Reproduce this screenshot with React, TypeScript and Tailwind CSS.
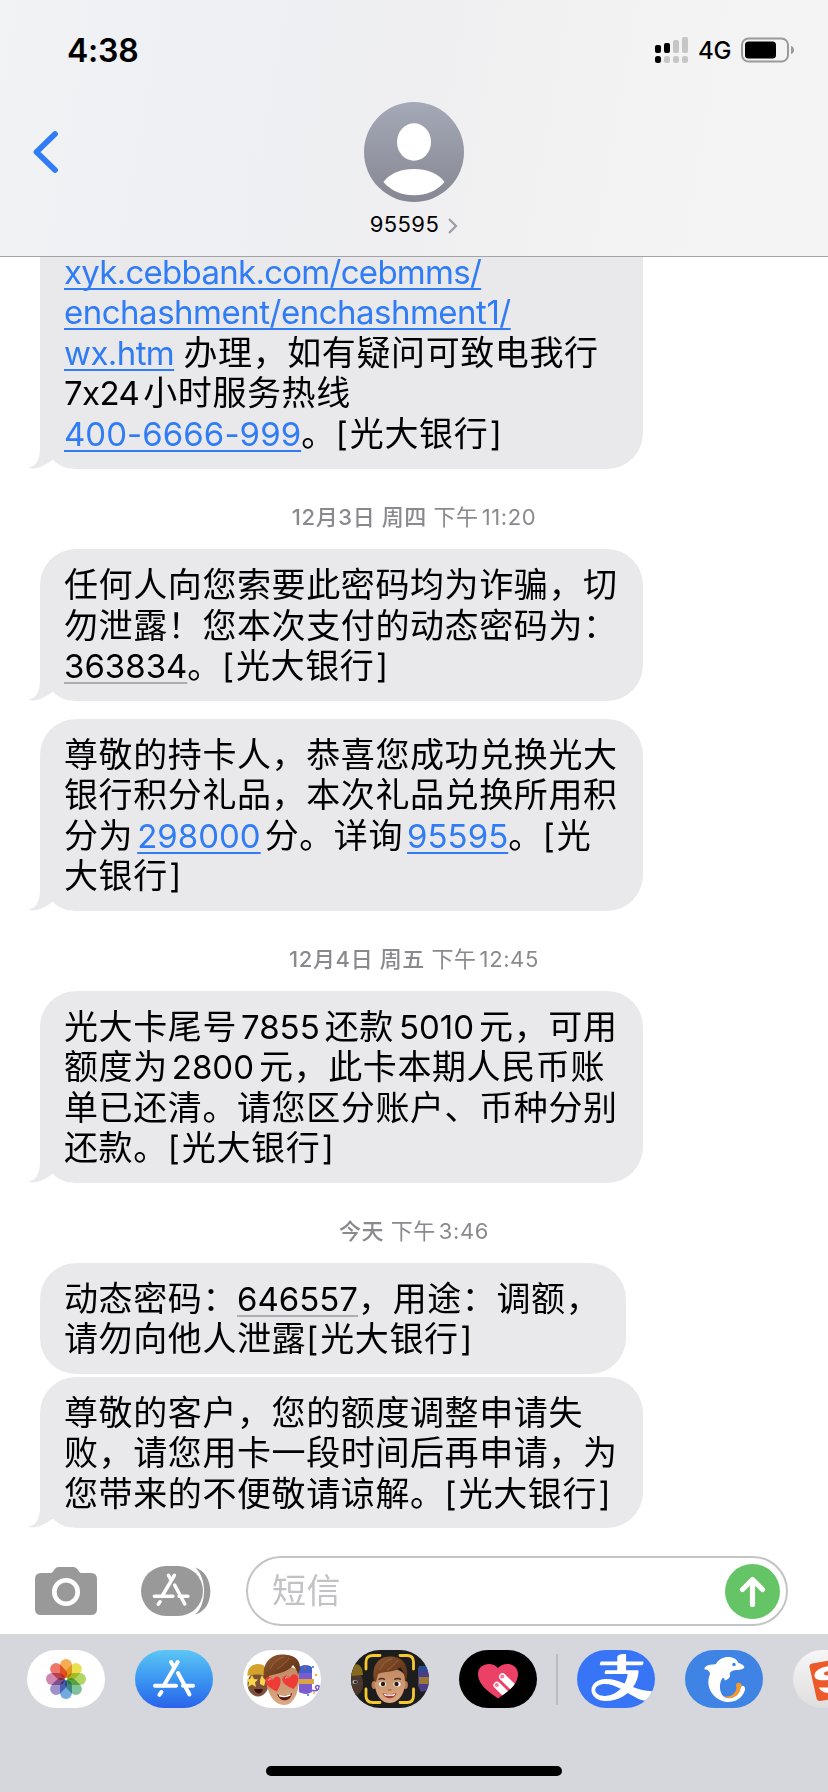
import { AiOutlineAlipay } from "react-icons/ai";
import type { ReactNode } from "react";

type Run = { t: string; kind?: "latin" | "link" | "code"; cls?: string };
type Message = { id: number; lines: Run[][]; box: string; tail: boolean };

const L = (t: string, cls = ""): Run => ({ t, kind: "latin", cls });
const A = (t: string, cls = ""): Run => ({ t, kind: "link", cls });
const C = (t: string, cls = ""): Run => ({ t, kind: "code", cls });
const T = (t: string): Run => ({ t });

// every bank text closes with the same signature
const sign: Run[] = [L("[", "mr-0.5"), T("光大银行"), L("]", "ml-[1.5px]")];

const m1: Message = {
  id: 1, box: "w-[603px] rounded-b-[36px] py-[15px]", tail: true,
  lines: [
    [A("xyk.cebbank.com/cebmms/", "tracking-[-0.72px]")],
    [A("enchashment/enchashment1/", "tracking-[-0.5px]")],
    [A("wx.htm", "tracking-[-0.6px]"), L(" "), T("办理，如有疑问可致电我行")],
    [L("7x24", "mr-1 tracking-[-0.6px]"), T("小时服务热线")],
    [A("400-6666-999", "tracking-[0.05px]"), T("。"), ...sign],
  ],
};
const m2: Message = {
  id: 2, box: "w-[603px] rounded-[36px] pt-4 pb-[14px] mb-[18px]", tail: true,
  lines: [
    [T("任何人向您索要此密码均为诈骗，切")],
    [T("勿泄露！您本次支付的动态密码为：")],
    [C("363834"), T("。"), ...sign],
  ],
};
const m3: Message = {
  id: 3, box: "w-[603px] rounded-[36px] pt-4 pb-[14px]", tail: true,
  lines: [
    [T("尊敬的持卡人，恭喜您成功兑换光大")],
    [T("银行积分礼品，本次礼品兑换所用积")],
    [T("分为"), A("298000", "ml-1 mr-1"), T("分。详询"), A("95595", "ml-1"), T("。"), L("[", "mr-0.5"), T("光")],
    [T("大银行"), L("]", "ml-[1.5px]")],
  ],
};
const m4: Message = {
  id: 4, box: "w-[603px] rounded-[36px] pt-4 pb-[14px]", tail: true,
  lines: [
    [T("光大卡尾号"), L("7855", "ml-1 mr-[5px]"), T("还款"), L("5010", "ml-[5px] mr-[5px]"), T("元，可用")],
    [T("额度为"), L("2800", "ml-1 mr-[5px]"), T("元，此卡本期人民币账")],
    [T("单已还清。请您区分账户、币种分别")],
    [T("还款。"), ...sign],
  ],
};
const m5: Message = {
  id: 5, box: "w-[586px] rounded-[36px] pt-4 pb-[14px] mb-[3px]", tail: false,
  lines: [
    [T("动态密码："), C("646557"), T("，用途：调额，")],
    [T("请勿向他人泄露"), ...sign],
  ],
};
const m6: Message = {
  id: 6, box: "w-[603px] rounded-[36px] pt-4 pb-[14px]", tail: true,
  lines: [
    [T("尊敬的客户，您的额度调整申请失")],
    [T("败，请您用卡一段时间后再申请，为")],
    [T("您带来的不便敬请谅解。"), ...sign],
  ],
};

const tone = {
  latin: "text-[33px]",
  link: "text-[33px] text-[#2f7cf6] underline decoration-2 underline-offset-[4px] [text-decoration-skip-ink:none]",
  code: "text-[33px] underline decoration-2 decoration-[#aeaeb2] underline-offset-[4px] [text-decoration-skip-ink:none]",
};

const Bubble = ({ msg }: { msg: Message }) => (
  <div className={`relative ml-10 shrink-0 bg-[#e9e9eb] px-6 ${msg.box}`}>
    {msg.tail && (
      <svg className="absolute bottom-0 -left-[11px]" width="40" height="40" viewBox="0 0 40 40">
        <path d="M11 0 V20 C11 31 7 37 0 38.6 C1 40 5 40 9 40 H40 V0 Z" fill="#e9e9eb" />
        <path d="M0 40 V38.8 C2 39.6 6 39.4 10 38 C16 36 20 33 23.5 30.5 C28 35 36 40 46 40 Z" fill="#fff" />
        <path d="M0 38.8 C8 37 11 31 11 20 L26 26 L23.5 30.5 C18 35 12 38.5 6 39.3 C3 39.6 1 39.4 0 38.8 Z" fill="#e9e9eb" />
      </svg>
    )}
    {msg.lines.map((line, i) => (
      <p key={i} className="relative h-[40.5px] whitespace-pre text-[34px] leading-[40.5px] tracking-[0.6px] text-black">
        {line.map((r, j) =>
          r.kind ? (
            <span key={j} className={`${tone[r.kind]} ${r.cls?.includes("tracking") ? "" : "tracking-normal"} ${r.cls}`}>{r.t}</span>
          ) : (
            <span key={j}>{r.t}</span>
          )
        )}
      </p>
    ))}
  </div>
);

const Stamp = ({ day, time, clock }: { day: string; time: string; clock: string }) => (
  <div className="flex h-20 shrink-0 items-center justify-center whitespace-pre pt-4 text-[22px] leading-8 tracking-[0.6px] text-[#8a8a8e]">
    <span className="font-medium">{day} </span>
    <span>{time}</span>
    <span className="ml-[3px]">{clock}</span>
  </div>
);

const AppGlyph = () => (
  <g stroke="#fff" strokeWidth="4" strokeLinecap="round" fill="none">
    <path d="M42.7 12 L28.5 36 M36 12 L39.3 17.6 M43 23 L54.5 44.5 M20 35.8 H41 M48 35.8 H58 M26.4 42 L24.4 44.8" />
  </g>
);

const petals = ["#f5a13c", "#e9dc3c", "#a6cf52", "#6dbb8c", "#5f9fdc", "#8f83c4", "#c878a8", "#ea6358"];

const Pill = ({ bg, children }: { bg: string; children: ReactNode }) => (
  <div className={`h-[58px] w-[78px] shrink-0 overflow-hidden rounded-[29px] ${bg}`}>{children}</div>
);

const Photos = () => (
  <svg viewBox="0 0 78 58" className="h-full w-full">
    {petals.map((c, i) => (
      <rect key={c} x="33" y="9" width="12" height="19" rx="6" fill={c} opacity="0.88"
        transform={`rotate(${i * 45} 39 29)`} className="mix-blend-multiply" />
    ))}
  </svg>
);

const HairDefs = () => (
  <defs>
    <linearGradient id="hair" x1="0" y1="0" x2="1" y2="1">
      <stop offset="0" stopColor="#8f5a33" />
      <stop offset="0.6" stopColor="#6d3b1d" />
      <stop offset="1" stopColor="#5a2e16" />
    </linearGradient>
    <linearGradient id="skin" x1="0" y1="0" x2="0" y2="1">
      <stop offset="0" stopColor="#c08a63" />
      <stop offset="1" stopColor="#dba983" />
    </linearGradient>
  </defs>
);

const Stickers = () => (
  <svg viewBox="0 0 78 58" className="h-full w-full">
    <HairDefs />
    <ellipse cx="15" cy="34" rx="10.5" ry="12.5" fill="#7d5238" />
    <path d="M4.5 26 C4 18 9 14 15 14 C21 14 25 18 24 26 C18 24 10 24 4.5 26 Z" fill="#d3a32b" />
    <path d="M9 25 L11 29 L15 29.5 L12 32.5 L13 37 L9 34.5 L5 37 L6 32.5 L3 29.5 L7 29 Z M19 25 L21 29 L23 30 L21 36 L17 34 L17 30 Z" fill="#f9d64c" />
    <path d="M11 39 H20 C19 45 13 45 11 39 Z" fill="#3c1512" />
    <path d="M56 18 C60 14 68 15 69 18 L69 28 V42 C65 45 59 44 56 42 Z" fill="#7a5bd0" />
    <path d="M56 17 C60 14 68 15 69 18 V23 H56 Z" fill="#3d62c9" />
    <path d="M56 29 H71 V34 H56 Z" fill="#d9a441" />
    <path d="M68 40 C73 42 77 40 76 36 C73 34 71 38 74 39" stroke="#7a5bd0" strokeWidth="1.6" fill="none" />
    <circle cx="62" cy="18" r="1" fill="#e2483d" />
    <circle cx="70" cy="17" r="1" fill="#3d6be0" />
    <circle cx="73" cy="25" r="1.2" fill="#f0b429" />
    <circle cx="65" cy="45" r="1" fill="#3d6be0" />
    <circle cx="71" cy="43" r="1" fill="#f0b429" />
    <path d="M23 24 C22 40 30 55 41 55 C51 55 57 42 56 22 C52 14 27 14 23 24 Z" fill="url(#skin)" />
    <path d="M21 27 C19 13 28 5 38 4.5 C48 4 58 8 57 19 L55 25 C54 20 52 17 50 15 C45 23 31 24 26 26 L24 30 Z" fill="url(#hair)" />
    <path d="M27 19 C31 11 36 8 41 7 M34 19 C40 15 44 11 46 8" stroke="#a4683e" strokeWidth="0.9" fill="none" />
    <path d="M34 44 C39 47 44 46 49 43 C48 52 37 53 34 44 Z" fill="#5e1a17" />
    <path d="M36 45.4 C40 47 44 46.6 47.5 44.8" stroke="#fff" strokeWidth="1.6" fill="none" />
    <path d="M34 41.5 C26 38 21 34 22.5 29.5 C24 26 28.5 26.5 30 30 C31.5 25.5 36.5 25.5 37.5 29.5 C38 34 36 38 34 41.5 Z M50.5 39 C43 36 38.5 32 39.5 28 C41 24.5 45.5 24.5 47 28 C48 23.5 53 23 55 27 C56 31 53.5 36 50.5 39 Z" fill="#ef3b36" />
    <path d="M25.5 30.5 C26 29 27 28.6 28 29 M42.5 28.5 C43 27 44 26.8 45 27.2" stroke="#ff9d94" strokeWidth="1.2" strokeLinecap="round" fill="none" />
  </svg>
);

const Memoji = () => (
  <svg viewBox="0 0 78 58" className="h-full w-full">
    <path d="M0 20 C8 20 12 25 12 34 C12 42 7 46 2 46 L0 40 Z" fill="#4b372b" />
    <path d="M3 15 C8 12 12 18 12 25 L0 26 Z" fill="#84691f" />
    <ellipse cx="4" cy="32" rx="2.6" ry="2" fill="#bbb" />
    <circle cx="4.5" cy="32" r="1.5" fill="#222" />
    <path d="M67 18 C71 14 76 16 78 20 V40 L70 42 L67 36 Z" fill="#4d3c86" />
    <path d="M68 27 H78 V34 H68 Z" fill="#9a7838" />
    <path d="M68 16 H77 V22 H67 Z" fill="#294c8f" />
    <ellipse cx="23" cy="35" rx="2.4" ry="4" fill="#b97c55" />
    <ellipse cx="54.5" cy="35" rx="2.4" ry="4" fill="#b97c55" />
    <path d="M24 26 C22 42 29 53 38.5 53 C48 53 56 42 54 26 C50 16 28 16 24 26 Z" fill="url(#skin)" />
    <path d="M23 31 C20 15 28 7 38 6.5 C49 6 58 12 56 28 L54 32 C54 24 52 20 49 17.5 C42 23 33 21 27 24 L25 32 Z" fill="url(#hair)" />
    <path d="M29 20 C32 13 36 10 41 9 M36 20 C41 17 45 13 47 10" stroke="#a4683e" strokeWidth="0.9" fill="none" />
    <ellipse cx="31.5" cy="34" rx="3.6" ry="2.6" fill="#fff" />
    <ellipse cx="46" cy="34" rx="3.6" ry="2.6" fill="#fff" />
    <circle cx="32" cy="34" r="2.2" fill="#2a1a12" />
    <circle cx="45.5" cy="34" r="2.2" fill="#2a1a12" />
    <path d="M27.5 29.5 Q31 27.5 34 29.5 M43 29.5 Q47 27.5 50 29.5" stroke="#4e2a16" strokeWidth="1.3" fill="none" />
    <path d="M37 39.5 Q38.7 40.6 40.4 39.5" stroke="#a36544" strokeWidth="1.2" fill="none" />
    <path d="M31.5 43 C36 44.5 41 44.5 45.5 43 C44 50 33.5 50 31.5 43 Z" fill="#a53c3a" />
    <path d="M32.5 43.4 C36 45 41 45 44.5 43.4 L43 45.8 H34 Z" fill="#fff" />
    <path d="M15 19 V12 Q15 5.5 22 5.5 H29 M49 5.5 H56 Q62.5 5.5 62.5 12 V19 M62.5 39 V46 Q62.5 52.5 56 52.5 H49 M29 52.5 H22 Q15 52.5 15 46 V39"
      stroke="#f6c92f" strokeWidth="2.8" strokeLinecap="round" fill="none" />
  </svg>
);

const HEART = "M39 48.5 C30 42 19 35 19 24 C19 13.5 33 11 39 18 C45 11 59 13.5 59 24 C59 35 48 42 39 48.5 Z";

const Heartbeat = () => (
  <svg viewBox="0 0 78 58" className="h-full w-full">
    <clipPath id="heart"><path d={HEART} /></clipPath>
    <path d={HEART} fill="#ec4067" />
    <g clipPath="url(#heart)" stroke="#fff" strokeWidth="7" strokeLinecap="round">
      <path d="M43.5 26.8 L60 43" />
      <path d="M38 35.2 L54 51" />
    </g>
    <circle cx="43.2" cy="26.6" r="2" fill="#f07a98" />
    <circle cx="37.8" cy="35" r="2" fill="#f07a98" />
  </svg>
);

const Dolphin = () => (
  <svg viewBox="0 0 78 58" className="h-full w-full">
    <path d="M19.5 18 C23 13.5 28 15 31 14 C34 8 41 6 47 7.5 C52 9 53 12 53.5 13 C57 14 59.5 15.5 59.3 17.5 C58 19.5 54 20 51 20 C47 20.5 44.5 22 44.8 24.5 C46 27 43 29.5 40 30.5 C39.5 28.5 39 28 37.5 28 C34 33 34 41 38 46 C44 51 54 47 55.5 38 C57 34 60.8 36 60 40 C57 50 47 53.5 39 51.5 C27 48 20 36 25 24 C25 21 22 19 19.5 19.5 Z" fill="#fff" />
    <circle cx="49" cy="14.5" r="1.7" fill="#3d83e6" />
    <path d="M38.5 46 C46 48 51 43 51.5 38 C50 34 52.5 31.5 56 33.5 C57.5 35 56 37 55.5 38 C54.5 46 46 51 38.5 46 Z" fill="#f59a2b" />
  </svg>
);

const Sogou = () => (
  <svg viewBox="0 0 78 58" className="h-full w-full">
    <path d="M16.5 17 Q16 14 19 13.5 L46 9 L60 46 L27 51 Q24 51 23.5 48 Z" fill="#ec5a2a" />
    <path d="M44 17 C32 14 21 20 21.5 26 C22 31 31 31 40 29 L40 25 C34 26.5 30 25 31 23 C33 20.5 38 21 44 22 Z" fill="#fff" />
    <path d="M26 37.5 H44 V43 C36 44 28 43 26 37.5 Z" fill="#fff" />
  </svg>
);

export default function App() {
  return (
    <div lang="zh-CN" className="flex h-[1792px] w-[828px] flex-col overflow-hidden bg-white font-[Inter,'Noto_Sans_CJK_SC',sans-serif] text-black">
      <header className="relative z-10 flex h-[257px] shrink-0 flex-col border-b border-[#a4a4a7] bg-[linear-gradient(100deg,#f2f3f4_0%,#eef0f4_20%,#efeff1_50%,#f3f3f3_75%,#f4f4f4_100%)]">
        <div className="flex h-[100px] items-center justify-between pr-[33px] pl-[67px]">
          <span className="pt-0.5 text-[32px] font-semibold tracking-[-0.2px]">4:38</span>
          <div className="flex items-center">
            <svg width="34" height="28" viewBox="0 0 34 28">
              <g fill="#c6c6c6">
                <rect x="18" y="4" width="6" height="13" rx="2" />
                <rect x="27" y="1" width="6" height="16" rx="2" />
                <rect x="9" y="20" width="6" height="7" rx="2.5" />
                <rect x="18" y="20" width="6" height="7" rx="2.5" />
                <rect x="27" y="20" width="6" height="7" rx="2.5" />
              </g>
              <rect x="0" y="9" width="6" height="8" rx="2" />
              <rect x="9" y="7" width="6" height="10" rx="2" />
              <rect x="0" y="20" width="6" height="7" rx="2.5" />
            </svg>
            <span className="ml-[9px] w-[33px] pt-0.5 text-[24px] font-medium tracking-[-0.3px]">4G</span>
            <svg className="ml-[9px]" width="55" height="26" viewBox="0 0 55 26">
              <rect x="2" y="1.5" width="46" height="23" rx="6.5" fill="none" stroke="#9a9a9a" strokeWidth="2" />
              <rect x="5" y="4.5" width="31" height="17" rx="3.5" />
              <path d="M51 9 C55 10 55 16 51 17 Z" fill="#9a9a9a" />
            </svg>
          </div>
        </div>
        <div className="grid grid-cols-[1fr_auto_1fr] pt-0.5">
          <svg className="mt-[28px] ml-[32px]" width="28" height="44" viewBox="0 0 28 44">
            <path d="M23 4 L4.5 22 L23 40" fill="none" stroke="#2f7cf6" strokeWidth="5.8" strokeLinecap="round" strokeLinejoin="round" />
          </svg>
          <div className="flex flex-col items-center">
            <svg width="100" height="100" viewBox="0 0 100 100">
              <defs>
                <linearGradient id="avatar" x1="0" y1="0" x2="0" y2="1">
                  <stop offset="0" stopColor="#a5a9b7" />
                  <stop offset="1" stopColor="#858892" />
                </linearGradient>
              </defs>
              <circle cx="50" cy="50" r="50" fill="url(#avatar)" />
              <ellipse cx="50" cy="40" rx="17" ry="18.7" fill="#fff" />
              <path d="M19.5 80 C26 71 37 67 50 67 C63 67 74 71 80.5 80 C73 89 62 93.3 50 93.3 C38 93.3 27 89 19.5 80 Z" fill="#fff" />
            </svg>
            <div className="mt-[6px] flex items-center gap-2">
              <span className="text-[22px] leading-8 tracking-[0.4px]">95595</span>
              <svg className="mt-1" width="11" height="18" viewBox="0 0 11 18">
                <path d="M2 2 L9 9 L2 16" fill="none" stroke="#9a9ca6" strokeWidth="2.2" />
              </svg>
            </div>
          </div>
        </div>
      </header>

      {/* thread slides under the header */}
      <main className="-mt-5 flex h-[1291px] shrink-0 flex-col justify-end">
        <Bubble msg={m1} />
        <Stamp day="12月3日 周四" time="下午" clock="11:20" />
        <Bubble msg={m2} />
        <Bubble msg={m3} />
        <Stamp day="12月4日 周五" time="下午" clock="12:45" />
        <Bubble msg={m4} />
        <Stamp day="今天" time="下午" clock="3:46" />
        <Bubble msg={m5} />
        <Bubble msg={m6} />
      </main>

      <div className="flex h-[106px] shrink-0 items-center pt-5 pr-10 pl-[35px]">
        <svg width="62" height="48" viewBox="0 0 62 48">
          <path d="M6 6 H16 C19 5 19 0 24 0 H38 C43 0 43 5 46 6 H56 Q62 6 62 12 V42 Q62 48 56 48 H6 Q0 48 0 42 V12 Q0 6 6 6 Z" fill="#999" />
          <circle cx="31" cy="25" r="11.7" fill="none" stroke="#fff" strokeWidth="4.6" />
        </svg>
        <svg className="ml-11" width="70" height="50" viewBox="0 0 70 50">
          <path d="M54 1.5 C74 7 75 43 54 48.5 C66 39 66 11 54 1.5 Z" fill="#999" />
          <rect width="62" height="50" rx="25" fill="#999" />
          <g transform="translate(-4.2 -1.2) scale(0.88)">
            <AppGlyph />
          </g>
        </svg>
        <div className="ml-[35px] flex h-[70px] flex-1 items-center justify-between rounded-full border-2 border-[#c4c4c6] pr-1.5 pl-6">
          <span className="pb-0.5 text-[34px] tracking-[0.5px] text-[#c2c2c5]">短信</span>
          <svg width="55" height="55" viewBox="0 0 55 55">
            <circle cx="27.5" cy="27.5" r="27.5" fill="#65c466" />
            <path d="M27.5 40.5 V16 M17.5 25.5 L27.5 15.5 L37.5 25.5" fill="none" stroke="#fff" strokeWidth="5.2" strokeLinecap="round" strokeLinejoin="round" />
          </svg>
        </div>
      </div>

      <footer className="flex flex-1 flex-col justify-between bg-[#d5d7dd] pt-4 pb-4">
        <div className="flex items-center gap-[30px] pl-[27px]">
          <Pill bg="bg-white"><Photos /></Pill>
          <Pill bg="bg-linear-to-b from-[#5cc6f5] to-[#2a62ea]">
            <svg viewBox="0 0 78 58" className="h-full w-full"><AppGlyph /></svg>
          </Pill>
          <Pill bg="bg-white"><Stickers /></Pill>
          <Pill bg="bg-[#1d1d1d]"><Memoji /></Pill>
          <Pill bg="bg-black"><Heartbeat /></Pill>
          <div className="-mx-[11px] h-[51px] w-0.5 shrink-0 bg-[#b9bbc0]" />
          <Pill bg="bg-[#3874f6]">
            <AiOutlineAlipay preserveAspectRatio="none" className="-mt-1 ml-[10px] h-[63px] w-[71px] text-white" />
          </Pill>
          <Pill bg="bg-[#3f83e4]"><Dolphin /></Pill>
          <Pill bg="bg-linear-to-b from-[#f6f6f6] to-[#dedede]"><Sogou /></Pill>
        </div>
        <div className="h-2.5 w-[296px] self-center rounded-full bg-black" />
      </footer>
    </div>
  );
}
